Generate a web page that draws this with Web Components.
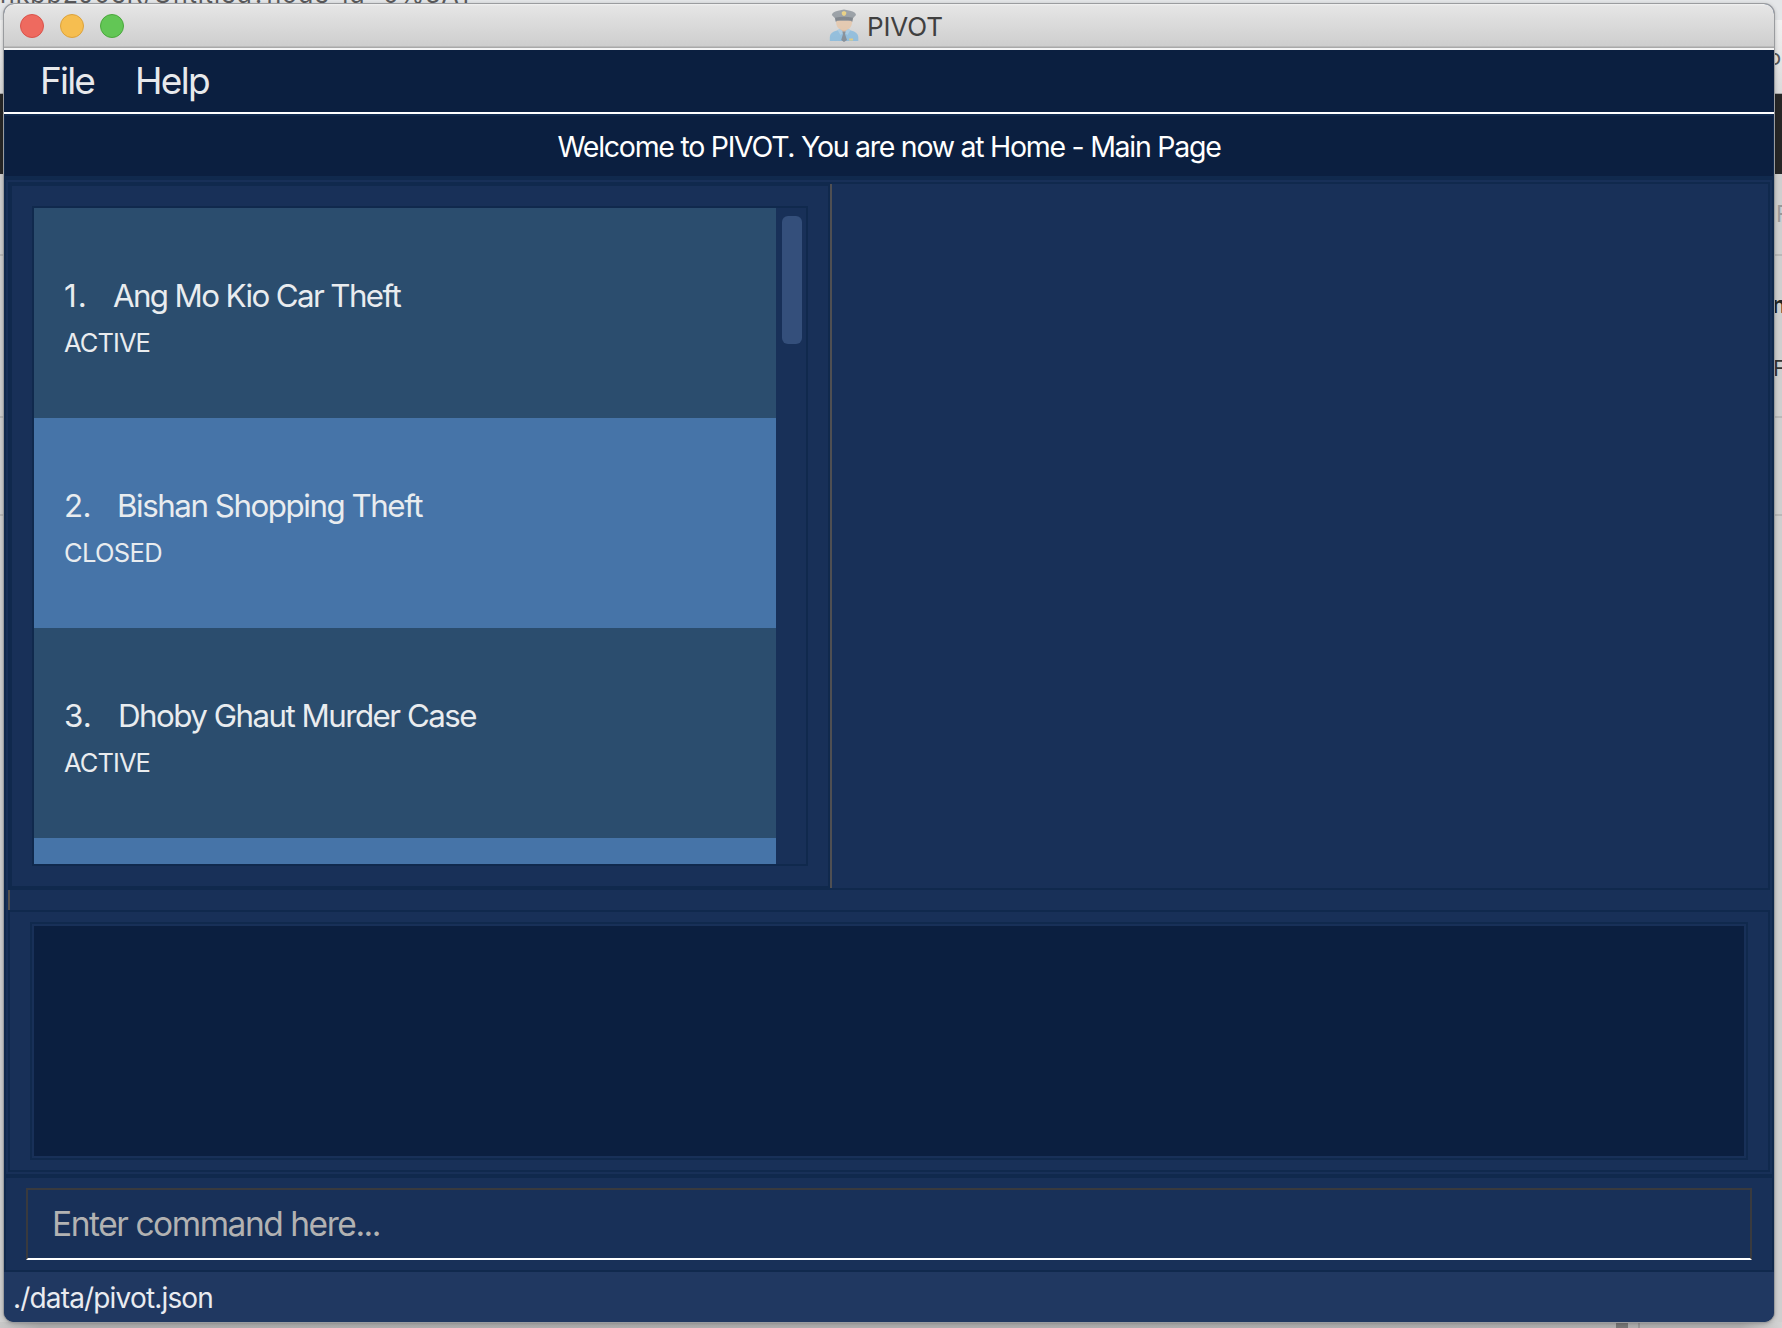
<!DOCTYPE html>
<html lang="en">
<head>
<meta charset="utf-8">
<title>PIVOT</title>
<style>
html,body{margin:0;height:100%;overflow:hidden}
body{font-family:Inter,"Liberation Sans",sans-serif;--edge:#10294d;--panel:#183058;--deep:#0b1f40}
</style>
</head>
<body>
<pivot-desktop>
  <pivot-window>
    <title-bar slot="title"></title-bar>
    <menu-strip></menu-strip>
    <page-header></page-header>
    <main-split></main-split>
    <result-display></result-display>
    <command-box></command-box>
    <status-bar></status-bar>
  </pivot-window>
</pivot-desktop>
<script>
const define = (name, html) => customElements.define(name, class extends HTMLElement {
  connectedCallback() {
    if (!this.shadowRoot) this.attachShadow({mode: 'open'}).innerHTML = '<style>*,:host{box-sizing:border-box}</style>' + html;
  }
});

/* A single line of text tracked to a given advance width. */
customElements.define('text-run', class extends HTMLElement {
  connectedCallback() {
    const root = this.attachShadow({mode: 'open'});
    root.innerHTML = '<style>:host{display:block;white-space:pre}span{display:inline-block}</style><span></span>';
    const s = root.querySelector('span');
    s.textContent = this.getAttribute('text');
    const w = parseFloat(this.getAttribute('w'));
    if (w) s.style.letterSpacing = ((w - s.getBoundingClientRect().width) / s.textContent.length) + 'px';
  }
});

define('officer-icon', `<style>:host{display:block;width:30px;height:33px;opacity:.55}svg{display:block}</style>
<svg width="30" height="33" viewBox="0 0 30 33">
<path d="M0.8 32V28Q1 23 8 21.5L11 20H19L22 21.5Q29 23 29.3 28V32Z" fill="#62aee3"/>
<path d="M11.5 17H18.5V21L15 24.5L11.5 21Z" fill="#e3a878"/>
<path d="M11 20L15 23.5L11.5 26L8.5 21ZM19 20L15 23.5L18.5 26L21.5 21Z" fill="#8cc5ec"/>
<path d="M13.3 22.5H16.7L16 25L18 31L15 33L12.2 31L14 25Z" fill="#4c5c6d"/>
<path d="M7 9H23.2V13Q22.5 19 18.5 20.5Q15 22 11.6 20.5Q7.5 19 7 13Z" fill="#edbd91"/>
<path d="M6.3 8H23.7L23.3 13L21.7 11.8H8.3L6.7 13Z" fill="#505a65"/>
<path d="M2.8 6Q3 3.4 9 1.8L15 .4L21 1.8Q27 3.4 27 6L24 9.3H6Z" fill="#65707b"/>
<path d="M6 8.8Q15 6.8 24 8.8L23.4 11.8Q15 9.6 6.6 11.8Z" fill="#37424f"/>
<path d="M12.8 3L15 2L17.2 3V5Q16.8 6.4 15 7Q13.2 6.4 12.8 5Z" fill="#f1c640"/>
<path d="M20.2 29.5H24V31.5H20.2Z" fill="#f1c640"/></svg>`);

define('pivot-desktop', `<style>
:host{display:block;position:relative;width:1782px;height:1328px;overflow:hidden;background:#cfcfcf}
.back{display:flex;flex-direction:column;height:100%}
.back>div{flex:none}
.url{height:20px;background:#e4e6e8;color:#5a5a5c;font-size:25px;line-height:30px;overflow:hidden}
.url text-run{margin-top:-21px}
.bar{height:74px;background:linear-gradient(#f1f1f1,#dadada);border-bottom:1px solid #a8a8a8}
.black{height:80px;background:#262626}
.side{height:82px;border-bottom:2px solid #b9b9b9}
.s2{height:162px}.s3{height:98px}
.edge{position:absolute;left:1774px;width:8px;overflow:hidden;line-height:30px;height:30px;white-space:pre}
.foot{position:absolute;left:0;right:0;bottom:0;height:6px;background:linear-gradient(90deg,#c8c8c8,#aeaeae 40px,#b0b0b0 1740px,#d4d4d4)}
.foot i{position:absolute;left:1616px;top:0;width:12px;height:6px;background:#777}
.foot i+i{left:1638px;width:2px;background:#999}
</style>
<div class="back"><div class="url"><text-run text="nkbp2J0eR/Untitled?node-id=0%3A1" w="470"></text-run></div><div class="bar"></div><div class="black"></div><div class="side"></div><div class="side s2"></div><div class="side s3"></div></div>
<div class="foot"><i></i><i></i></div>
<div class="edge" style="top:42px;font-size:22px;color:#555;text-indent:-6px">o</div>
<div class="edge" style="top:199px;font-size:23px;color:#999;text-indent:2px">F</div>
<div class="edge" style="top:290px;font-size:23px;color:#222;font-weight:700;text-indent:-2px">n</div>
<div class="edge" style="top:353px;font-size:22px;color:#333;text-indent:-1px">F</div>
<slot></slot>`);

define('pivot-window', `<style>
:host{position:absolute;left:4px;top:4px;width:1770px;height:1318px;border-radius:10px;overflow:hidden;display:flex;flex-direction:column;background:var(--panel);box-shadow:0 0 0 1px #9a9c9f,0 1px 5px #0005}
.body{display:flex;flex-direction:column;flex:1;min-height:0}
</style><slot name="title"></slot><div class="body"><slot></slot></div>`);

define('title-bar', `<style>
:host{display:flex;height:46px;flex:none;align-items:flex-start;background:linear-gradient(#f2f2f2 0,#e5e5e5 2px,#cecece 42px,#a8a8a8 43px,#a8a8a8 44px,#f4f4f4 44px)}
.dots{display:flex;gap:16px;padding:10px 0 0 16px;width:825px}
.dots i{width:24px;height:24px;border-radius:50%;background:#ee6a5f;border:1px solid #d9534b}
.dots i:nth-child(2){background:#f6be50;border-color:#dca23c}.dots i:nth-child(3){background:#62c655;border-color:#4aa73c}
officer-icon{margin-top:5px}
text-run{font-size:26px;line-height:46px;color:#404040;padding-left:8px}
</style><div class="dots"><i></i><i></i><i></i></div><officer-icon></officer-icon><text-run text="PIVOT" w="76"></text-run>`);

define('menu-strip', `<style>
:host{display:flex;height:64px;flex:none;background:var(--deep);border-bottom:2px solid #fff;padding-left:36px;font-size:37px;line-height:62px;color:#e8e9ec}
text-run{width:95px}
</style><text-run text="File" w="54"></text-run><text-run text="Help" w="74"></text-run>`);

define('page-header', `<style>
:host{display:flex;justify-content:center;height:66px;flex:none;background:var(--deep);border:solid var(--edge);border-width:2px 1px 4px;font-size:28.5px;line-height:61px;color:#fff}
</style><text-run text="Welcome to PIVOT. You are now at Home - Main Page" w="663"></text-run>`);

define('case-list', `<style>
:host{display:flex;width:776px;height:660px;border:2px solid var(--edge);overflow:hidden}
.rows{width:742px;height:656px;display:flex;flex-direction:column;overflow:hidden}
.row{height:210px;flex:none;padding:68px 0 0 30px;background:#2b4d6e;color:#e9ecef}
.row:nth-child(even){background:#4674a8}
.t{display:flex;font-size:31.3px;line-height:41px}
.s{font-size:25.5px;line-height:36px;margin-top:8px}
.track{padding:8px 0 0 6px}.thumb{width:20px;height:128px;border-radius:6px;background:#344f7b}
</style><div class="rows">
<div class="row"><div class="t"><text-run text="1." w="24" style="width:49px"></text-run><text-run text="Ang Mo Kio Car Theft" w="287"></text-run></div><text-run class="s" text="ACTIVE" w="86"></text-run></div>
<div class="row"><div class="t"><text-run text="2." w="27" style="width:53px"></text-run><text-run text="Bishan Shopping Theft" w="305"></text-run></div><text-run class="s" text="CLOSED" w="98"></text-run></div>
<div class="row"><div class="t"><text-run text="3." w="28" style="width:54px"></text-run><text-run text="Dhoby Ghaut Murder Case" w="358"></text-run></div><text-run class="s" text="ACTIVE" w="86"></text-run></div>
<div class="row"></div></div><div class="track"><div class="thumb"></div></div>`);

define('main-split', `<style>
:host{display:block;height:730px;flex:none;padding:2px 4px 0;box-shadow:inset 2px 0 var(--edge),inset -2px 0 var(--edge)}
.frame{display:flex;height:708px;border:2px solid var(--edge)}
.left{width:820px;border:2px solid var(--edge);padding:20px}
.div{width:2px;background:#4f4f52}
.gap{height:20px}.gap i{display:block;width:2px;height:20px;background:#55524f}
</style><div class="frame"><div class="left"><case-list></case-list></div><div class="div"></div></div><div class="gap"><i></i></div>`);

define('result-display', `<style>
:host{display:block;height:264px;flex:none;padding:0 4px 2px;box-shadow:inset 2px 0 var(--edge),inset -2px 0 var(--edge)}
.outer{height:262px;border:2px solid var(--edge);padding:10px 20px}
.inner{height:238px;border:2px solid var(--edge);padding:2px}
.fill{height:230px;background:var(--deep)}
</style><div class="outer"><div class="inner"><div class="fill"></div></div></div>`);

define('command-box', `<style>
:host{display:block;height:98px;flex:none;border:solid var(--edge);border-width:4px 2px 2px;padding:10px 20px}
.field{height:72px;display:flex;border:2px solid #393a3e;border-bottom-color:#fff;padding-left:24px;font-size:33.5px;line-height:68px;color:#b2b2b2}
</style><div class="field"><text-run text="Enter command here..." w="328"></text-run></div>`);

define('status-bar', `<style>
:host{display:flex;flex:1;background:#203861;padding-left:9px;font-size:28px;line-height:52px;color:#e9ebf0;box-shadow:inset 0 -1px #46597b}
</style><text-run text="./data/pivot.json" w="200"></text-run>`);
</script>
</body>
</html>
